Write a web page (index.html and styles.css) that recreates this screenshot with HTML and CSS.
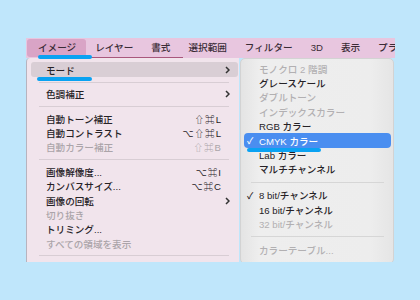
FILE: index.html
```html
<!DOCTYPE html>
<html lang="ja">
<head>
<meta charset="UTF-8">
<title>イメージ メニュー</title>
<link rel="stylesheet" href="styles.css">
</head>
<body>

<div class="screen">
  <div class="menubar">
    <span class="menubar-item is-open">イメージ</span>
    <span class="menubar-item">レイヤー</span>
    <span class="menubar-item">書式</span>
    <span class="menubar-item">選択範囲</span>
    <span class="menubar-item">フィルター</span>
    <span class="menubar-item">3D</span>
    <span class="menubar-item">表示</span>
    <span class="menubar-item">プラグイン</span>
  </div>

  <div class="menus">
    <ul class="menu menu-main">
      <li class="item is-hover first"><span class="label">モード</span><svg class="arrow" viewBox="0 0 5 8"><path d="M1 1l3 3-3 3"/></svg></li>
      <li class="sep"></li>
      <li class="item"><span class="label">色調補正</span><svg class="arrow" viewBox="0 0 5 8"><path d="M1 1l3 3-3 3"/></svg></li>
      <li class="sep"></li>
      <li class="item"><span class="label">自動トーン補正</span><span class="key">⇧⌘L</span></li>
      <li class="item"><span class="label">自動コントラスト</span><span class="key">⌥⇧⌘L</span></li>
      <li class="item off"><span class="label">自動カラー補正</span><span class="key">⇧⌘B</span></li>
      <li class="sep"></li>
      <li class="item"><span class="label">画像解像度...</span><span class="key">⌥⌘I</span></li>
      <li class="item"><span class="label">カンバスサイズ...</span><span class="key">⌥⌘C</span></li>
      <li class="item"><span class="label">画像の回転</span><svg class="arrow" viewBox="0 0 5 8"><path d="M1 1l3 3-3 3"/></svg></li>
      <li class="item off"><span class="label">切り抜き</span></li>
      <li class="item"><span class="label">トリミング...</span></li>
      <li class="item off"><span class="label">すべての領域を表示</span></li>
      <li class="sep"></li>
    </ul>

    <ul class="menu menu-sub">
      <li class="item off"><span class="check"></span>モノクロ 2 階調</li>
      <li class="item"><span class="check"></span>グレースケール</li>
      <li class="item off"><span class="check"></span>ダブルトーン</li>
      <li class="item off"><span class="check"></span>インデックスカラー</li>
      <li class="item"><span class="check"></span>RGB カラー</li>
      <li class="item is-selected"><span class="check">✓</span>CMYK カラー</li>
      <li class="item"><span class="check"></span>Lab カラー</li>
      <li class="item"><span class="check"></span>マルチチャンネル</li>
      <li class="sep"></li>
      <li class="item"><span class="check">✓</span>8 bit/チャンネル</li>
      <li class="item"><span class="check"></span>16 bit/チャンネル</li>
      <li class="item off"><span class="check"></span>32 bit/チャンネル</li>
      <li class="sep"></li>
      <li class="item off"><span class="check"></span>カラーテーブル...</li>
    </ul>
  </div>

  <!-- 青いマーカー -->
  <span class="marker marker-image"></span>
  <span class="marker marker-mode"></span>
  <span class="marker marker-cmyk"></span>
</div>

</body>
</html>
```

FILE: styles.css
```css
body {
  margin: 0;
  background: #bfe6fb;
  font-family: "Liberation Sans", "Noto Sans CJK JP", "DejaVu Sans", sans-serif;
  font-size: 9.6px;
  font-weight: 500;
  color: #262226;
}

.screen {
  position: relative;
  width: 369px;
  height: 224px;
  margin: 38px 0 0 26px;
  overflow: hidden;
}

/* メニューバー */
.menubar {
  display: flex;
  align-items: center;
  height: 20px;
  padding-left: 1px;
  background: linear-gradient(#a9577c, #a9577c) no-repeat 63px 19px / 94px 1px, #e8c6df;
  white-space: nowrap;
}
.menubar-item { padding: 0 9px; line-height: 18px; color: #3a2c36; }
.menubar-item.is-open {
  padding: 0 10px 0 11px;
  background: #d9a4c6;
  border-radius: 3px;
}

/* プルダウン */
.menus { display: flex; align-items: flex-start; }

.menu { list-style: none; margin: 0; }

.menu-main {
  box-sizing: border-box;
  width: 213px;
  height: 204px;
  padding: 4px 0 0;
  background: #f1e4ec;
  border-left: 1px solid #b7b3be;
  border-top-left-radius: 4px;
}

.menu-sub {
  box-sizing: border-box;
  width: 154px;
  margin-left: 1px;
  padding: 2.5px 0 6px;
  background: linear-gradient(90deg, #e4e4e4, #eeeeee 12%, #ededed 85%, #e5e5e5);
  border: 1px solid #d3d3d3;
  border-radius: 5px;
}

.item {
  display: flex;
  align-items: center;
  height: 14.4px;
  white-space: nowrap;
}
.item.off { color: #aba4a9; }

.menu-main .item { margin: 0 1px 0 4px; padding: 0 8px 0 15px; }
.menu-main .item.first { height: 15px; }
.menu-main .item.is-hover { background: #d9ced5; border-radius: 3px; }
.menu-main .label { flex: 1; }
.key { margin-right: 8px; letter-spacing: 1px; font-size: 9.6px; }
.arrow { width: 5px; height: 8px; fill: none; stroke: #333; stroke-width: 1.5; }

.sep { box-sizing: border-box; height: 10px; padding-top: 4.5px; }
.sep::after {
  content: "";
  display: block;
  margin: 0 10px 0 12px;
  border-top: 1px solid #d8cdd4;
}

.menu-sub .item { margin: 0 2px 0 3px; padding-left: 3px; }
.menu-sub .item.off { color: #b2b0b2; }
.menu-sub .item.is-selected { background: #4a8ef0; color: #fff; border-radius: 4px; }
.menu-sub .sep { height: 11.5px; padding-top: 5px; }
.menu-sub .sep::after { margin: 0 9px 0 10px; border-color: #d6d6d6; }
.check { width: 12px; font-size: 9px; }

/* 注釈の青線 */
.marker {
  position: absolute;
  height: 4px;
  background: #0aa2f2;
  border-radius: 2px;
}
.marker-image { left: 12px; top: 17px; width: 54px; }
.marker-mode { left: 11px; top: 39px; width: 55px; }
.marker-cmyk { left: 221px; top: 110px; width: 74px; }
```
